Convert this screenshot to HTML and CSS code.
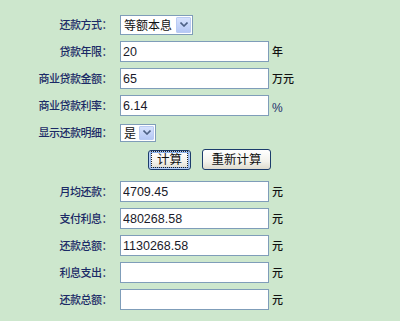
FILE: index.html
```html
<!DOCTYPE html>
<html lang="zh-CN">
<head>
<meta charset="utf-8">
<title>房贷计算器</title>
<link rel="stylesheet" href="styles.css">
</head>
<body>
<div class="form">
  <div class="row">
    <span class="lbl">还款方式：</span>
    <div class="sel sel-wide"><span class="sel-text">等额本息</span><span class="arrow"><svg width="8" height="5" viewBox="0 0 8 5"><path d="M0.5 0.5 L4 4 L7.5 0.5" fill="none" stroke="#4d6185" stroke-width="1.6"/></svg></span></div>
  </div>
  <div class="row">
    <span class="lbl">贷款年限：</span>
    <input class="field" type="text" value="20">
    <span class="unit">年</span>
  </div>
  <div class="row">
    <span class="lbl">商业贷款金额：</span>
    <input class="field" type="text" value="65">
    <span class="unit">万元</span>
  </div>
  <div class="row">
    <span class="lbl">商业贷款利率：</span>
    <input class="field" type="text" value="6.14">
    <span class="unit pct">%</span>
  </div>
  <div class="row">
    <span class="lbl">显示还款明细：</span>
    <div class="sel sel-small"><span class="sel-text">是</span><span class="arrow"><svg width="8" height="5" viewBox="0 0 8 5"><path d="M0.5 0.5 L4 4 L7.5 0.5" fill="none" stroke="#4d6185" stroke-width="1.6"/></svg></span></div>
  </div>
  <div class="row btn-row">
    <button class="btn btn-default" type="button"><span class="focus">计算</span></button>
    <button class="btn" type="button">重新计算</button>
  </div>
  <div class="results">
    <div class="row">
      <span class="lbl">月均还款：</span>
      <input class="field" type="text" value="4709.45">
      <span class="unit">元</span>
    </div>
    <div class="row">
      <span class="lbl">支付利息：</span>
      <input class="field" type="text" value="480268.58">
      <span class="unit">元</span>
    </div>
    <div class="row">
      <span class="lbl">还款总额：</span>
      <input class="field" type="text" value="1130268.58">
      <span class="unit">元</span>
    </div>
    <div class="row">
      <span class="lbl">利息支出：</span>
      <input class="field" type="text" value="">
      <span class="unit">元</span>
    </div>
    <div class="row">
      <span class="lbl">还款总额：</span>
      <input class="field" type="text" value="">
      <span class="unit">元</span>
    </div>
  </div>
</div>
</body>
</html>
```
FILE: styles.css
```css
html, body {
  margin: 0;
  padding: 0;
  background: #cde7cd;
}
body {
  width: 400px;
  height: 321px;
  overflow: hidden;
  font-family: "Noto Sans CJK SC", "Liberation Sans", sans-serif;
}
.form {
  padding-top: 11px;
}
.row {
  display: flex;
  align-items: center;
  height: 27px;
}
.lbl {
  width: 112px;
  text-align: right;
  font-size: 11px;
  letter-spacing: -0.5px;
  font-weight: 500;
  color: #1b2a66;
  margin-right: 8px;
  white-space: nowrap;
  line-height: 1;
}
.field {
  box-sizing: border-box;
  width: 149px;
  height: 21px;
  margin: 0;
  padding: 0 2px;
  border: 1px solid #7f9db9;
  background: #fff;
  font-family: "Liberation Sans", Arial, sans-serif;
  font-size: 12.5px;
  color: #1a1a2a;
  outline: none;
}
.unit {
  margin-left: 3px;
  font-size: 11px;
  font-weight: 500;
  color: #111;
  line-height: 1;
}
.unit.pct {
  font-family: "Liberation Sans", Arial, sans-serif;
  font-size: 12px;
  font-weight: 400;
  color: #1e2f6c;
  margin-top: 4px;
}
.sel {
  box-sizing: border-box;
  display: flex;
  align-items: stretch;
  border: 1px solid #7f9db9;
  background: #fff;
  padding: 1px;
}
.sel-wide {
  width: 73px;
  height: 20px;
}
.sel-small {
  width: 36px;
  height: 18px;
}
.sel-text {
  flex: 1;
  display: flex;
  align-items: center;
  padding-left: 2px;
  font-size: 12px;
  color: #111;
  line-height: 1;
}
.arrow {
  width: 15px;
  display: flex;
  align-items: center;
  justify-content: center;
  background: linear-gradient(#d6e2fd, #b5c8f5);
  border: 1px solid #b9cbf3;
  box-sizing: border-box;
  border-radius: 1px;
}
.btn-row {
  padding-left: 148px;
  gap: 11px;
}
.btn {
  box-sizing: border-box;
  height: 21px;
  width: 69px;
  margin: 0;
  padding: 0;
  white-space: nowrap;
  border: 1px solid #1c3c6c;
  border-radius: 3px;
  background: linear-gradient(#ffffff, #f3f2ec 60%, #dedbce);
  font-family: "Noto Sans CJK SC", sans-serif;
  font-size: 12.5px;
  color: #111;
  line-height: 1;
}
.btn-default {
  width: 43px;
  height: 20px;
  box-shadow: inset 0 0 0 1px #b6cff7, inset 0 0 0 2px #8eb3ea;
}
.focus {
  display: block;
  margin: 0 2px;
  padding: 1px 0;
  border: 1px dotted #222;
}
.results {
  margin-top: 5px;
}
```
